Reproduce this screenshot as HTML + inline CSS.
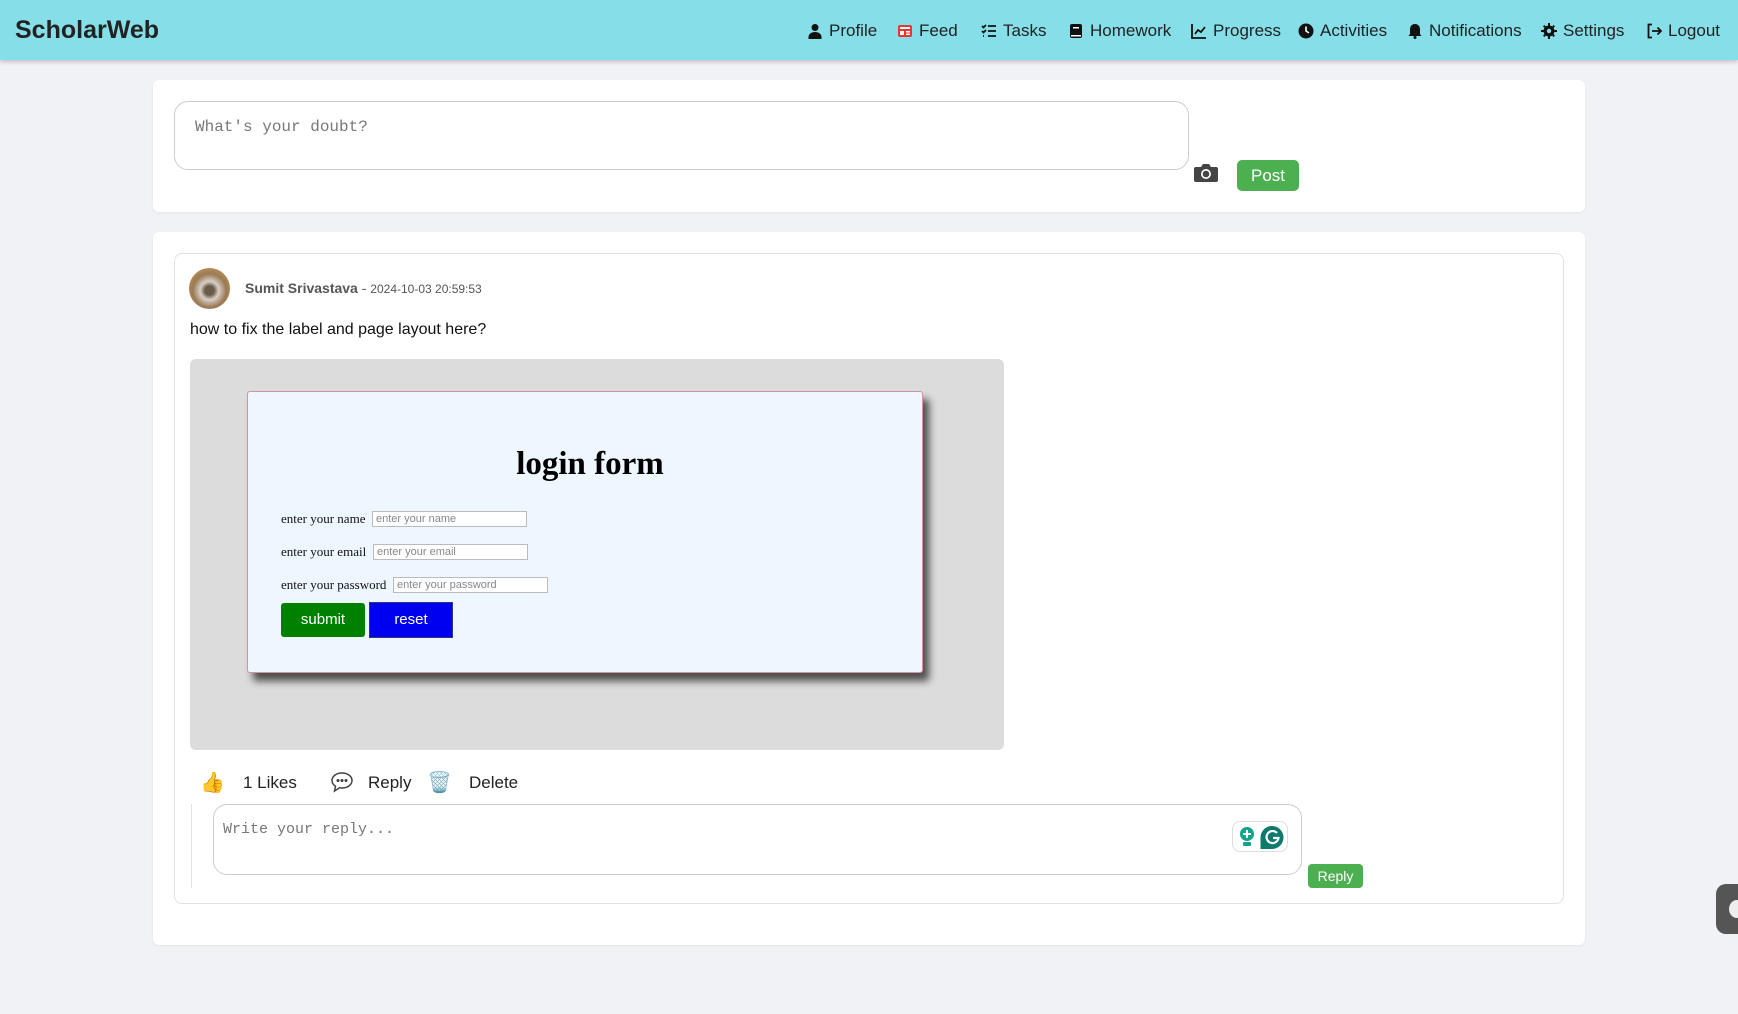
<!DOCTYPE html>
<html><head><meta charset="utf-8"><style>
*{box-sizing:border-box;margin:0;padding:0}
body{width:1738px;height:1014px;background:#f0f2f5;font-family:"Liberation Sans",sans-serif;position:relative;overflow:hidden}
.a{position:absolute}
.nav{left:0;top:0;width:1738px;height:60px;background:#86dfe8;box-shadow:0 2px 4px rgba(0,0,0,.2)}
.logo{left:15px;top:16px;font-size:25px;font-weight:bold;color:#222}
.ni{top:21px;font-size:17px;color:#222;display:flex;align-items:center;gap:6px;white-space:nowrap}
.ni svg{width:16px;height:16px}
.card{background:#fff;border-radius:6px;box-shadow:0 1px 3px rgba(0,0,0,.06)}
.mono{font-family:"Liberation Mono","DejaVu Sans Mono",monospace;color:#777;font-size:16px}
.btn{background:#4caf50;color:#fff;border-radius:5px;text-align:center}
.lab{font-family:"Liberation Serif",serif;font-size:13px;color:#111}
.inp{border:1px solid #bbb;background:#fff;height:16px;font-size:11px;color:#888;padding-left:3px;line-height:14px}
</style></head><body>
<div class="a nav"></div>
<div class="a logo">ScholarWeb</div>
<div class="a ni" style="left:807px"><svg viewBox="0 0 16 16"><circle cx="8" cy="4.5" r="3.5" fill="#111"/><path d="M1.5 16v-2c0-3 3-5 6.5-5s6.5 2 6.5 5v2z" fill="#111"/></svg>Profile</div>
<div class="a ni" style="left:897px"><svg viewBox="0 0 16 16"><rect x="1" y="2" width="14" height="12" rx="2" fill="#e33"/><rect x="3" y="4" width="10" height="2" fill="#fff"/><rect x="3" y="8" width="4" height="4" fill="#fff"/><rect x="9" y="8" width="4" height="1.5" fill="#fff"/><rect x="9" y="10.5" width="4" height="1.5" fill="#fff"/></svg>Feed</div>
<div class="a ni" style="left:981px"><svg viewBox="0 0 16 16" fill="none" stroke="#111" stroke-width="1.8"><path d="M1 3l1.5 1.5L5 2M1 8l1.5 1.5L5 7M2 13h1M7 3h8M7 8h8M7 13h8"/></svg>Tasks</div>
<div class="a ni" style="left:1068px"><svg viewBox="0 0 16 16"><rect x="2" y="1" width="12" height="14" rx="2" fill="#111"/><rect x="5" y="4" width="6" height="1.5" fill="#fff"/><rect x="3" y="12" width="10" height="1.5" fill="#fff"/></svg>Homework</div>
<div class="a ni" style="left:1191px"><svg viewBox="0 0 16 16" fill="none" stroke="#111" stroke-width="1.8"><path d="M1 1v14h14M4 11l3-4 3 2 4-5"/></svg>Progress</div>
<div class="a ni" style="left:1298px"><svg viewBox="0 0 16 16"><circle cx="8" cy="8" r="7.5" fill="#111"/><path d="M8 3.5V8l3 2" stroke="#fff" stroke-width="1.6" fill="none"/></svg>Activities</div>
<div class="a ni" style="left:1407px"><svg viewBox="0 0 16 16"><path d="M8 1c3 0 5 2.3 5 5.3V11l1.5 2h-13L3 11V6.3C3 3.3 5 1 8 1z" fill="#111"/><circle cx="8" cy="14.5" r="1.5" fill="#111"/></svg>Notifications</div>
<div class="a ni" style="left:1541px"><svg viewBox="0 0 16 16"><circle cx="8" cy="8" r="5.5" fill="#111"/><path d="M7 0h2v16H7zM0 7h16v2H0z" fill="#111"/><path d="M2 3.4L3.4 2 14 12.6 12.6 14zM12.6 2L14 3.4 3.4 14 2 12.6z" fill="#111"/><circle cx="8" cy="8" r="2.2" fill="#86dfe8"/></svg>Settings</div>
<div class="a ni" style="left:1646px"><svg viewBox="0 0 16 16" fill="none" stroke="#111" stroke-width="1.8"><path d="M6 1.5H2.5v13H6M6 8h9M11.5 4.5L15 8l-3.5 3.5"/></svg>Logout</div>

<div class="a card" style="left:153px;top:80px;width:1432px;height:132px"></div>
<div class="a" style="left:174px;top:101px;width:1015px;height:69px;border:1px solid #ccc;border-radius:14px;background:#fff"></div>
<div class="a mono" style="left:195px;top:118px">What's your doubt?</div>
<svg class="a" style="left:1193px;top:162px" width="26" height="22" viewBox="0 0 26 22"><path d="M3 5h5l2-3h6l2 3h5a2 2 0 0 1 2 2v11a2 2 0 0 1-2 2H3a2 2 0 0 1-2-2V7a2 2 0 0 1 2-2z" fill="#444"/><circle cx="13" cy="12" r="5" fill="#fff"/><circle cx="13" cy="12" r="3.3" fill="#444"/></svg>
<div class="a btn" style="left:1237px;top:160px;width:62px;height:31px;line-height:31px;font-size:17px">Post</div>

<div class="a card" style="left:153px;top:232px;width:1432px;height:713px"></div>
<div class="a" style="left:174px;top:253px;width:1390px;height:651px;border:1px solid #e2e2e2;border-radius:8px"></div>
<div class="a" style="left:189px;top:268px;width:41px;height:41px;border-radius:50%;background:radial-gradient(circle at 50% 55%,#6a5a48 0 15%,#d8d0c8 30%,#9a7a55 55%,#c8945a 85%)"></div>
<div class="a" style="left:245px;top:280px;font-size:14px;color:#555"><b>Sumit Srivastava</b> - <span style="font-size:12px">2024-10-03 20:59:53</span></div>
<div class="a" style="left:190px;top:321px;font-size:16px;color:#111">how to fix the label and page layout here?</div>

<div class="a" style="left:190px;top:359px;width:814px;height:391px;background:#dcdcdc;border-radius:6px"></div>
<div class="a" style="left:247px;top:391px;width:676px;height:282px;background:#eef6ff;border:1px solid #c99;border-radius:3px;box-shadow:6px 8px 8px rgba(0,0,0,.65)"></div>
<div class="a" style="left:247px;top:446px;width:686px;text-align:center;font-family:'Liberation Serif',serif;font-weight:bold;font-size:33px;color:#000">login form</div>
<div class="a lab" style="left:281px;top:511px">enter your name</div>
<div class="a inp" style="left:372px;top:511px;width:155px">enter your name</div>
<div class="a lab" style="left:281px;top:544px">enter your email</div>
<div class="a inp" style="left:373px;top:544px;width:155px">enter your email</div>
<div class="a lab" style="left:281px;top:577px">enter your password</div>
<div class="a inp" style="left:393px;top:577px;width:155px">enter your password</div>
<div class="a" style="left:281px;top:603px;width:84px;height:34px;background:#008000;border-radius:3px;color:#fff;text-align:center;line-height:34px;font-size:15px">submit</div>
<div class="a" style="left:369px;top:602px;width:84px;height:36px;background:#0000f0;border:1px solid #337;color:#fff;text-align:center;line-height:34px;font-size:15px">reset</div>

<div class="a" style="left:200px;top:770px;font-size:20px">👍</div>
<div class="a" style="left:243px;top:773px;font-size:17px;color:#222">1 Likes</div>
<svg class="a" style="left:330px;top:771px" width="24" height="22" viewBox="0 0 24 22" fill="none" stroke="#444" stroke-width="1.5"><path d="M12 2C6 2 2 5.5 2 9.5c0 2.3 1.3 4.3 3.5 5.6L4.5 20l5-3.2c.8.1 1.6.2 2.5.2 6 0 10-3.5 10-7.5S18 2 12 2z"/><circle cx="8" cy="9.5" r=".8" fill="#444"/><circle cx="12" cy="9.5" r=".8" fill="#444"/><circle cx="16" cy="9.5" r=".8" fill="#444"/></svg>
<div class="a" style="left:368px;top:773px;font-size:17px;color:#222">Reply</div>
<div class="a" style="left:427px;top:770px;font-size:20px">🗑️</div>
<div class="a" style="left:469px;top:773px;font-size:17px;color:#222">Delete</div>

<div class="a" style="left:191px;top:804px;width:1px;height:84px;background:#e2e2e2"></div>
<div class="a" style="left:213px;top:804px;width:1089px;height:71px;border:1px solid #ccc;border-radius:14px;background:#fff"></div>
<div class="a mono" style="left:223px;top:821px;font-size:15px">Write your reply...</div>
<div class="a" style="left:1232px;top:821px;width:56px;height:31px;border:1px solid #ddd;border-radius:8px;background:#fff"></div>
<svg class="a" style="left:1238px;top:826px" width="18" height="22" viewBox="0 0 18 22"><circle cx="9" cy="8" r="7" fill="#15a38a"/><path d="M9 4v8M5 8h8" stroke="#fff" stroke-width="2"/><rect x="5" y="16" width="8" height="4" rx="1" fill="#15a38a"/></svg>
<svg class="a" style="left:1259px;top:825px" width="26" height="25" viewBox="0 0 26 25"><path d="M13 1a11.5 11.5 0 1 1 0 23H1.5V12.5A11.5 11.5 0 0 1 13 1z" fill="#0d7a6c"/><path d="M18 8a6 6 0 1 0 1.5 5H14" stroke="#fff" stroke-width="2.2" fill="none"/></svg>
<div class="a btn" style="left:1308px;top:864px;width:55px;height:24px;line-height:24px;font-size:14px;border-radius:4px">Reply</div>

<div class="a" style="left:1716px;top:884px;width:40px;height:50px;background:#555;border-radius:10px"></div>
<div class="a" style="left:1729px;top:900px;width:16px;height:18px;background:#eee;border-radius:50%"></div>
</body></html>
